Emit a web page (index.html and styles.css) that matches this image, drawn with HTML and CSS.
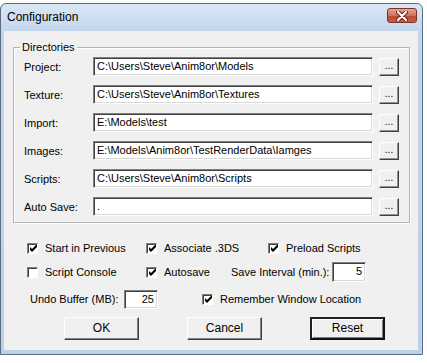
FILE: index.html
```html
<!DOCTYPE html>
<html lang="en">
<head>
  <meta charset="UTF-8" />
  <title>Configuration</title>
  <link rel="stylesheet" href="styles.css">
</head>
<body>

<div class="window">
  <div class="titlebar">
    <span class="title">Configuration</span>
    <span class="close">
      <svg width="12" height="10" viewBox="0 0 12 10">
        <path d="M2 1 L10 9 M10 1 L2 9" stroke="#5a1e16" stroke-width="4" stroke-linecap="round"/>
        <path d="M2 1 L10 9 M10 1 L2 9" stroke="#fff" stroke-width="2.2" stroke-linecap="round"/>
      </svg>
    </span>
  </div>

  <div class="client">
    <fieldset class="group">
      <legend>Directories</legend>
      <div class="dir-grid">
        <span class="lbl">Project:</span>
        <div class="field">C:\Users\Steve\Anim8or\Models</div>
        <div class="browse">...</div>

        <span class="lbl">Texture:</span>
        <div class="field">C:\Users\Steve\Anim8or\Textures</div>
        <div class="browse">...</div>

        <span class="lbl">Import:</span>
        <div class="field">E:\Models\test</div>
        <div class="browse">...</div>

        <span class="lbl">Images:</span>
        <div class="field">E:\Models\Anim8or\TestRenderData\Iamges</div>
        <div class="browse">...</div>

        <span class="lbl">Scripts:</span>
        <div class="field">C:\Users\Steve\Anim8or\Scripts</div>
        <div class="browse">...</div>

        <span class="lbl">Auto Save:</span>
        <div class="field">.</div>
        <div class="browse">...</div>
      </div>
    </fieldset>

    <div class="options">
      <div class="opt-row row-1">
        <span class="chk col-a"><i class="box on"></i>Start in Previous</span>
        <span class="chk col-b"><i class="box on"></i>Associate .3DS</span>
        <span class="chk"><i class="box on"></i>Preload Scripts</span>
      </div>
      <div class="opt-row row-2">
        <span class="chk col-a"><i class="box"></i>Script Console</span>
        <span class="chk col-b2"><i class="box on"></i>Autosave</span>
        <span class="num-label interval">Save Interval (min.):</span>
        <div class="num">5</div>
      </div>
      <div class="opt-row row-3">
        <span class="num-label undo">Undo Buffer (MB):</span>
        <div class="num">25</div>
        <span class="chk remember"><i class="box on"></i>Remember Window Location</span>
      </div>
    </div>

    <div class="buttons">
      <div class="btn">OK</div>
      <div class="btn">Cancel</div>
      <div class="btn default">Reset</div>
    </div>
  </div>
</div>

</body>
</html>
```

FILE: styles.css
```css
body {
  margin: 0;
  padding-top: 3px;
  background-color: #fff;
  font-family: 'Liberation Sans', Arial, sans-serif;
  font-size: 11px;
  color: #000;
}
.window {
  width: 421px;
  height: 350px;
  border: 1px solid #5d6d80;
  border-radius: 6px 6px 0 0;
  background: linear-gradient(#dae6f4, #c3d6ed 28px, #bcd1e9);
  display: flex;
  flex-direction: column;
}
.titlebar {
  height: 27px;
  display: flex;
  justify-content: space-between;
  padding: 0 5px 0 6px;
}
.title {
  font-size: 12px;
  line-height: 27px;
}
.close {
  margin-top: 4px;
  width: 30px;
  height: 15px;
  box-sizing: border-box;
  border: 1px solid #7a3328;
  border-radius: 3px;
  background: linear-gradient(#e8a493, #d0705d 50%, #bf4632 51%, #c95a45);
  display: flex;
  align-items: center;
  justify-content: center;
}
.client {
  flex: 1;
  margin: 0 4px 4px 3px;
  padding: 10px 8px 0 9px;
  background-color: #f0f0f0;
}
.group {
  margin: 0;
  min-width: 0;
  padding: 3px 10px 6px 10px;
  border: 1px solid #b5b5b5;
  box-shadow: 1px 1px 0 #fff, inset 1px 1px 0 #fff;
}
.group legend {
  padding: 0 2px;
  margin-left: -4px;
  line-height: 13px;
}
.dir-grid {
  display: grid;
  grid-template-columns: 63px 1fr 20px;
  grid-auto-rows: 19px;
  column-gap: 6px;
  row-gap: 9px;
  align-items: center;
}
.field, .num {
  height: 19px;
  box-sizing: border-box;
  padding: 0 3px;
  line-height: 16px;
  background-color: #fff;
  border: 1px solid;
  border-color: #808080 #fff #fff #808080;
  box-shadow: inset 1px 1px 0 #404040, inset -1px -1px 0 #d8d8d8;
  white-space: nowrap;
  overflow: hidden;
}
.browse {
  height: 18px;
  box-sizing: border-box;
  border: 1px solid;
  border-color: #fff #404040 #404040 #fff;
  box-shadow: inset -1px -1px 0 #909090;
  background-color: #f0f0f0;
  text-align: center;
  line-height: 14px;
  font-size: 10px;
}
.options {
  padding-top: 13px;
}
.opt-row {
  display: flex;
  align-items: center;
  height: 24px;
}
.row-1, .row-2 {
  padding-left: 14px;
}
.row-3 {
  height: 30px;
  padding-left: 17px;
}
.chk {
  display: flex;
  align-items: center;
}
.col-a {
  width: 119px;
}
.col-b {
  width: 122px;
}
.col-b2 {
  width: 85px;
}
.box {
  width: 11px;
  height: 11px;
  box-sizing: border-box;
  margin-right: 7px;
  background-color: #fff;
  border: 1px solid;
  border-color: #808080 #fff #fff #808080;
  box-shadow: inset 1px 1px 0 #404040;
  display: flex;
  align-items: center;
  justify-content: center;
}
.box.on::after {
  content: '';
  width: 7px;
  height: 7px;
  margin: 1px 0 0 1px;
  background: url("data:image/svg+xml;utf8,<svg xmlns='http://www.w3.org/2000/svg' width='7' height='7' viewBox='0 0 7 7'><path d='M0 2 L2 4 L7 -1 L7 2 L2 7 L0 5 Z' fill='black'/></svg>") no-repeat;
}
.num {
  width: 34px;
  text-align: right;
}
.interval {
  width: 101px;
}
.undo {
  width: 94px;
}
.row-2 .num {
  height: 20px;
}
.remember {
  margin-left: 44px;
}
.buttons {
  display: flex;
  gap: 48px;
  padding: 3px 0 0 51px;
}
.btn {
  width: 75px;
  height: 23px;
  box-sizing: border-box;
  border: 1px solid;
  border-color: #fff #404040 #404040 #fff;
  box-shadow: inset -1px -1px 0 #808080;
  background-color: #f0f0f0;
  text-align: center;
  line-height: 20px;
  font-size: 12px;
}
.btn.default {
  border: 2px solid;
  border-color: #222 #111 #111 #222;
  box-shadow: inset 1px 1px 0 #fff, inset -1px -1px 0 #808080;
  line-height: 19px;
}
```
